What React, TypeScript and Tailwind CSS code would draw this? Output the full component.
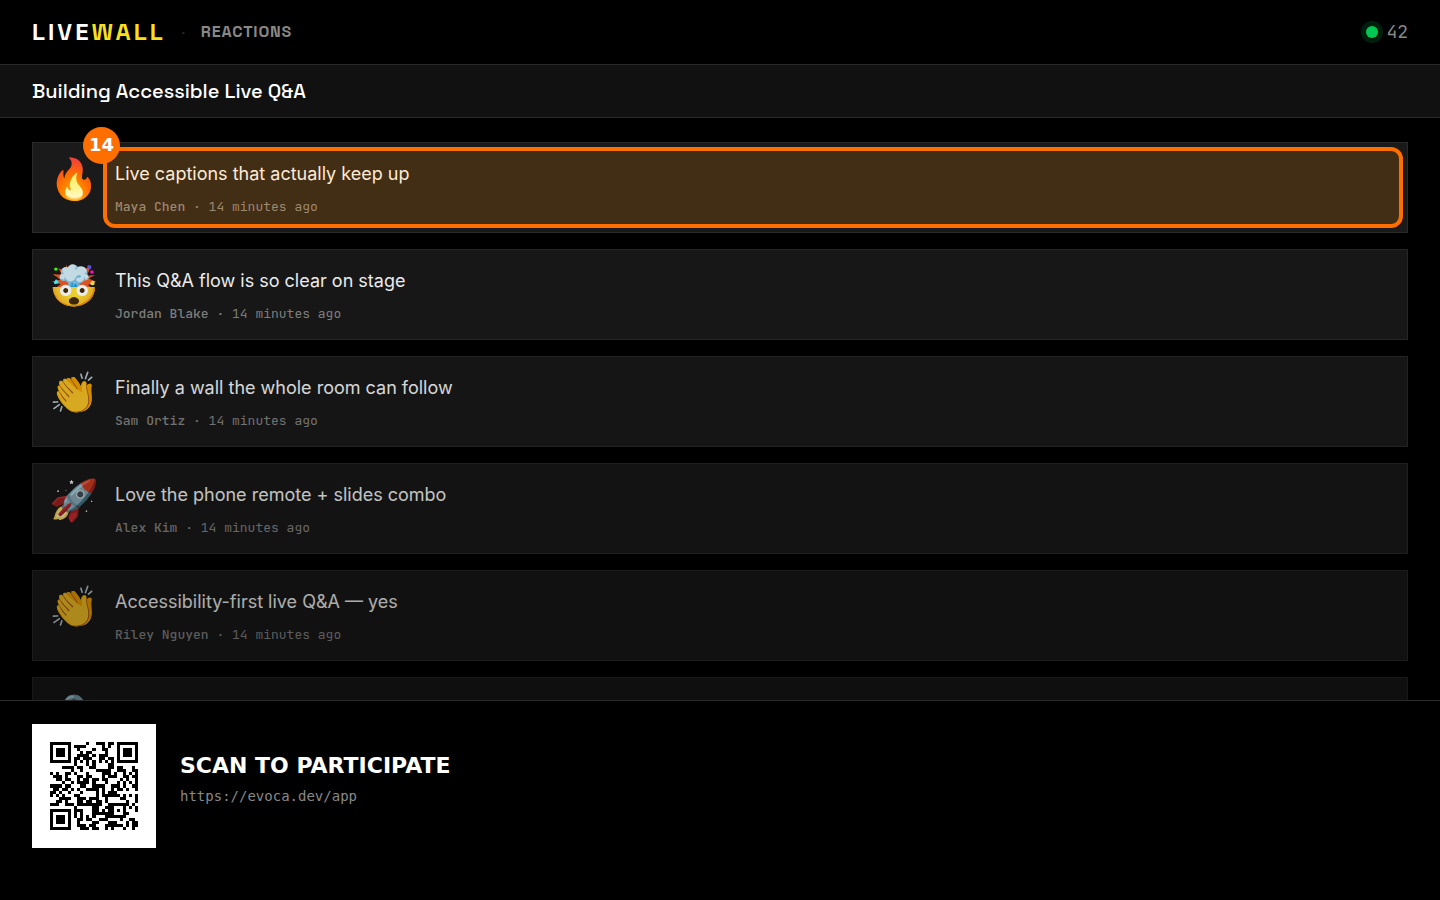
import { useMemo } from "react";

type Reaction = {
  emoji: string;
  text: string;
  author: string;
  time: string;
  fade: string;
  pin?: number;
};

const reactions: Reaction[] = [
  { emoji: "🔥", text: "Live captions that actually keep up", author: "Maya Chen", time: "14 minutes ago", fade: "opacity-100", pin: 14 },
  { emoji: "🤯", text: "This Q&A flow is so clear on stage", author: "Jordan Blake", time: "14 minutes ago", fade: "opacity-[0.92]" },
  { emoji: "👏", text: "Finally a wall the whole room can follow", author: "Sam Ortiz", time: "14 minutes ago", fade: "opacity-[0.84]" },
  { emoji: "🚀", text: "Love the phone remote + slides combo", author: "Alex Kim", time: "14 minutes ago", fade: "opacity-[0.76]" },
  { emoji: "👏", text: "Accessibility-first live Q&A — yes", author: "Riley Nguyen", time: "14 minutes ago", fade: "opacity-[0.68]" },
  { emoji: "🔒", text: "", author: "", time: "", fade: "opacity-60" },
];

// Version 3, level H: 29x29 modules, two blocks of 13 data + 22 ecc codewords.
const SIZE = 29;

function gfMul(a: number, b: number) {
  let r = 0;
  for (let i = 7; i >= 0; i--) {
    r = (r << 1) ^ ((r >>> 7) * 0x11d);
    r ^= ((b >>> i) & 1) * a;
  }
  return r;
}

function reedSolomon(data: number[], degree: number) {
  const gen = new Array(degree).fill(0);
  gen[degree - 1] = 1;
  let root = 1;
  for (let i = 0; i < degree; i++) {
    for (let j = 0; j < degree; j++) {
      gen[j] = gfMul(gen[j], root);
      if (j + 1 < degree) gen[j] ^= gen[j + 1];
    }
    root = gfMul(root, 2);
  }
  const rem = new Array(degree).fill(0);
  for (const b of data) {
    const f = b ^ rem.shift();
    rem.push(0);
    gen.forEach((c, i) => (rem[i] ^= gfMul(c, f)));
  }
  return rem as number[];
}

function codewords(text: string) {
  let bits = "0100" + text.length.toString(2).padStart(8, "0");
  for (const ch of text) bits += ch.charCodeAt(0).toString(2).padStart(8, "0");
  bits += "0000";
  const data = bits.match(/.{8}/g)!.map((b) => parseInt(b, 2));
  for (let pad = 0xec; data.length < 26; pad ^= 0xec ^ 0x11) data.push(pad);
  const blocks = [data.slice(0, 13), data.slice(13)];
  const ecc = blocks.map((b) => reedSolomon(b, 22));
  const out: number[] = [];
  for (let i = 0; i < 13; i++) blocks.forEach((b) => out.push(b[i]));
  for (let i = 0; i < 22; i++) ecc.forEach((b) => out.push(b[i]));
  return out;
}

const masks = [
  (x: number, y: number) => (x + y) % 2 === 0,
  (_x: number, y: number) => y % 2 === 0,
  (x: number, _y: number) => x % 3 === 0,
  (x: number, y: number) => (x + y) % 3 === 0,
  (x: number, y: number) => (Math.floor(x / 3) + Math.floor(y / 2)) % 2 === 0,
  (x: number, y: number) => ((x * y) % 2) + ((x * y) % 3) === 0,
  (x: number, y: number) => (((x * y) % 2) + ((x * y) % 3)) % 2 === 0,
  (x: number, y: number) => (((x + y) % 2) + ((x * y) % 3)) % 2 === 0,
];

function buildMatrix(words: number[], mask: number) {
  const m: boolean[][] = Array.from({ length: SIZE }, () => new Array(SIZE).fill(false));
  const fixed: boolean[][] = Array.from({ length: SIZE }, () => new Array(SIZE).fill(false));
  const set = (x: number, y: number, v: boolean) => {
    if (x < 0 || y < 0 || x >= SIZE || y >= SIZE) return;
    m[y][x] = v;
    fixed[y][x] = true;
  };

  for (let i = 0; i < SIZE; i++) {
    set(6, i, i % 2 === 0);
    set(i, 6, i % 2 === 0);
  }
  for (const [cx, cy] of [[3, 3], [SIZE - 4, 3], [3, SIZE - 4]]) {
    for (let dy = -4; dy <= 4; dy++)
      for (let dx = -4; dx <= 4; dx++) {
        const d = Math.max(Math.abs(dx), Math.abs(dy));
        set(cx + dx, cy + dy, d !== 2 && d !== 4);
      }
  }
  for (let dy = -2; dy <= 2; dy++)
    for (let dx = -2; dx <= 2; dx++)
      set(22 + dx, 22 + dy, Math.max(Math.abs(dx), Math.abs(dy)) !== 1);

  const format = (2 << 3) | mask;
  let rem = format;
  for (let i = 0; i < 10; i++) rem = (rem << 1) ^ ((rem >>> 9) * 0x537);
  const bits = ((format << 10) | rem) ^ 0x5412;
  const bit = (i: number) => ((bits >>> i) & 1) === 1;
  for (let i = 0; i <= 5; i++) set(8, i, bit(i));
  set(8, 7, bit(6));
  set(8, 8, bit(7));
  set(7, 8, bit(8));
  for (let i = 9; i < 15; i++) set(14 - i, 8, bit(i));
  for (let i = 0; i < 8; i++) set(SIZE - 1 - i, 8, bit(i));
  for (let i = 8; i < 15; i++) set(8, SIZE - 15 + i, bit(i));
  set(8, SIZE - 8, true);

  let n = 0;
  for (let right = SIZE - 1; right >= 1; right -= 2) {
    if (right === 6) right = 5;
    for (let v = 0; v < SIZE; v++)
      for (let j = 0; j < 2; j++) {
        const x = right - j;
        const y = ((right + 1) & 2) === 0 ? SIZE - 1 - v : v;
        if (fixed[y][x]) continue;
        const dark = n < words.length * 8 && ((words[n >> 3] >>> (7 - (n & 7))) & 1) === 1;
        m[y][x] = dark !== masks[mask](x, y);
        n++;
      }
  }
  return m;
}

function penalty(m: boolean[][]) {
  let score = 0;
  const cols = m.map((_, x) => m.map((row) => row[x]));
  for (const line of [...m, ...cols]) {
    const s = line.map((v) => (v ? "1" : "0")).join("");
    for (const run of s.match(/0+|1+/g)!) if (run.length >= 5) score += run.length - 2;
    for (let i = 0; i + 11 <= SIZE; i++) {
      const part = s.slice(i, i + 11);
      if (part === "10111010000" || part === "00001011101") score += 40;
    }
  }
  for (let y = 0; y < SIZE - 1; y++)
    for (let x = 0; x < SIZE - 1; x++)
      if (m[y][x] === m[y][x + 1] && m[y][x] === m[y + 1][x] && m[y][x] === m[y + 1][x + 1]) score += 3;
  const dark = m.flat().filter(Boolean).length;
  score += Math.floor(Math.abs((dark * 100) / (SIZE * SIZE) - 50) / 5) * 10;
  return score;
}

function QrCode({ value }: { value: string }) {
  const path = useMemo(() => {
    const words = codewords(value);
    const all = masks.map((_, i) => buildMatrix(words, i));
    const best = all.reduce((a, b) => (penalty(b) < penalty(a) ? b : a));
    return best.flatMap((row, y) => row.map((on, x) => (on ? `M${x} ${y}h1v1h-1z` : ""))).join("");
  }, [value]);

  return (
    <div className="shrink-0 bg-white p-[18px]">
      <svg viewBox="0 0 29 29" className="size-[88px]" shapeRendering="crispEdges" role="img" aria-label="QR code">
        <path d={path} fill="#000" />
      </svg>
    </div>
  );
}

function Pin({ count }: { count: number }) {
  return (
    <div className="pointer-events-none absolute -inset-3 rounded-xl border-4 border-[#ff6f00] bg-[#ff8800]/[0.175]">
      <span className="absolute -top-6 -left-6 size-[37px] rounded-full bg-[#ff6f00] text-center font-['DejaVu_Sans',sans-serif] text-lg leading-9 font-bold text-white">
        {count}
      </span>
    </div>
  );
}

function ReactionCard({ emoji, text, author, time, fade, pin }: Reaction) {
  return (
    <li className={`flex min-h-[91px] shrink-0 gap-4 border border-[#2a2a2a] bg-[#1a1a1a] p-4 ${fade}`}>
      <span className="w-[50px] shrink-0 text-[40px] leading-10">{emoji}</span>
      <div className="relative min-w-0 flex-1">
        <p className="text-lg leading-[29px] text-white">{text}</p>
        {author && (
          <p className="mt-2.5 font-['JetBrains_Mono','DejaVu_Sans_Mono',monospace] text-[13px] leading-[18px] text-[#888888]">
            <span className="font-medium">{author}</span> · {time}
          </p>
        )}
        {pin && <Pin count={pin} />}
      </div>
    </li>
  );
}

export default function App() {
  return (
    <div className="flex h-screen flex-col overflow-hidden bg-black font-['Inter',sans-serif] text-white">
      <header className="flex h-[65px] shrink-0 items-center justify-between border-b border-[#2a2a2a] px-8">
        <div className="flex items-center gap-4 font-['Space_Grotesk','Inter',sans-serif]">
          <h1 className="text-2xl font-bold tracking-[3px]">
            LIVE<span className="text-[#f7df1e]">WALL</span>
          </h1>
          <span className="text-[#2a2a2a]">·</span>
          <span className="font-semibold tracking-wider text-[#888888]">REACTIONS</span>
        </div>
        <div className="flex items-center gap-2">
          <span className="size-3 rounded-full bg-[#00c853] ring-[5px] ring-[#00c853]/15" />
          <span className="font-['JetBrains_Mono','DejaVu_Sans_Mono',monospace] text-lg leading-6 text-[#888888]">42</span>
        </div>
      </header>

      <div className="flex h-[53px] shrink-0 items-center border-b border-[#2a2a2a] bg-[#111111] px-8">
        <h2 className="font-['Space_Grotesk','Inter',sans-serif] text-xl font-medium">Building Accessible Live Q&amp;A</h2>
      </div>

      <main className="min-h-0 flex-1 overflow-hidden px-8 pt-6">
        <ul className="flex flex-col gap-4">
          {reactions.map((r, i) => (
            <ReactionCard key={i} {...r} />
          ))}
        </ul>
      </main>

      <footer className="flex h-[200px] shrink-0 items-start gap-6 border-t border-[#2a2a2a] px-8 pt-[23px]">
        <QrCode value="https://evoca.dev/app" />
        <div className="pt-[26px]">
          <p className="font-['DejaVu_Sans',sans-serif] text-[22px] leading-8 font-bold">SCAN TO PARTICIPATE</p>
          <a href="https://evoca.dev/app" className="mt-1 block font-['DejaVu_Sans_Mono',monospace] text-sm leading-5 text-[#888888]">
            https://evoca.dev/app
          </a>
        </div>
      </footer>
    </div>
  );
}
